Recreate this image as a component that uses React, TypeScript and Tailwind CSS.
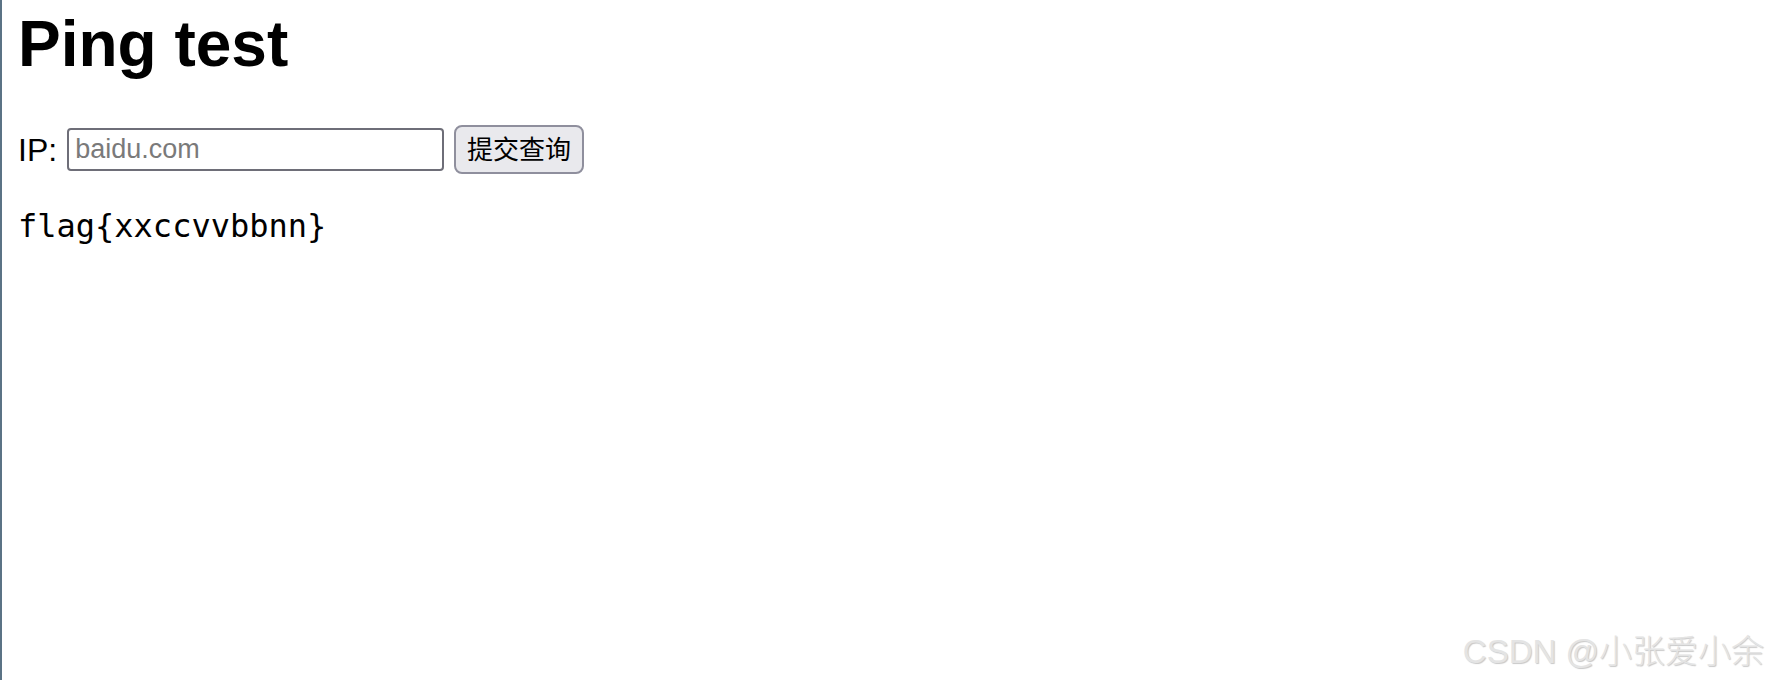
export default function App() {
  return (
    <div className="relative min-h-[680px] border-l-2 border-[#5b7385] bg-white pl-[16px] text-black [font-family:'Liberation_Sans','Noto_Sans_CJK_SC',sans-serif]">
      <h1 className="pt-[12px] text-[64px] font-bold leading-none">Ping test</h1>

      <form className="mt-[49px] flex items-center" onSubmit={(e) => e.preventDefault()}>
        <label htmlFor="ip" className="text-[32px] leading-none">
          IP:
        </label>
        <input
          id="ip"
          name="ip"
          placeholder="baidu.com"
          className="ml-[10px] h-[43px] w-[377px] rounded-[4px] border-2 border-[#6e6e78] px-[6px] text-[27px] outline-none placeholder:text-[#7a7a7a]"
        />
        <button
          type="submit"
          className="ml-[10px] h-[49px] w-[130px] rounded-[8px] border-2 border-[#8f8f9d] bg-[#e9e9ed] text-[26px] leading-none"
        >
          提交查询
        </button>
      </form>

      <pre className="mt-[36px] text-[32px] leading-none [font-family:'DejaVu_Sans_Mono',monospace]">
        flag{"{"}xxccvvbbnn{"}"}
      </pre>

      <div className="absolute bottom-[12px] right-[6px] text-[33px] font-light leading-none text-[#e4e4e4] [text-shadow:1px_1px_1px_rgba(0,0,0,0.22)]">
        CSDN @小张爱小余
      </div>
    </div>
  );
}
